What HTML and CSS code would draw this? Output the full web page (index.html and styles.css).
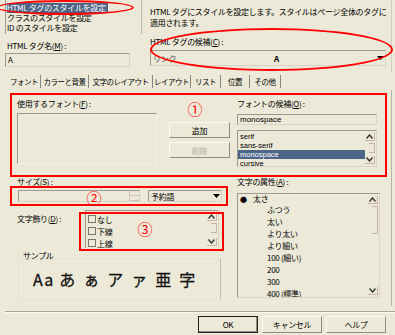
FILE: index.html
```html
<!DOCTYPE html>
<html>
<head>
	<title>スタイルの設定</title>
	<link rel="stylesheet" href="styles.css">
</head>
<body>
	<div class="dialog">
		<div class="top">
			<div class="top-left">
				<ul class="style-kinds">
					<li><span class="selected">HTML タグのスタイルを設定</span></li>
					<li>クラスのスタイルを設定</li>
					<li>ID のスタイルを設定</li>
				</ul>
				<div class="label tag-label">HTML タグ名(<u>M</u>) :</div>
				<div class="textbox tag-name">A</div>
			</div>
			<div class="top-right">
				<p class="desc">HTML タグにスタイルを設定します。スタイルはページ全体のタグに<br>適用されます。</p>
				<div class="label cand-label">HTML タグの候補(<u>C</u>) :</div>
				<div class="combo candidates">
					<span class="combo-text">リンク</span>
					<span class="combo-mid">A</span>
					<span class="combo-arrow"><svg width="7" height="4" viewBox="0 0 7 4"><polygon points="0,0 7,0 3.5,4" fill="#000"/></svg></span>
				</div>
			</div>
		</div>

		<div class="tabs">
			<span class="tab active">フォント</span>
			<span class="tab">カラーと背景</span>
			<span class="tab">文字のレイアウト</span>
			<span class="tab">レイアウト</span>
			<span class="tab">リスト</span>
			<span class="tab">位置</span>
			<span class="tab">その他</span>
		</div>

		<div class="tab-body">
			<div class="col-left">
				<div class="label">使用するフォント(<u>F</u>) :</div>
				<div class="font-row">
					<div class="fontbox"></div>
					<div class="btn-col">
						<button class="btn">追加</button>
						<button class="btn disabled">削除</button>
					</div>
				</div>

				<div class="label size-label">サイズ(<u>S</u>) :</div>
				<div class="size-row">
					<div class="spinbox">
						<span class="spin-field"></span>
						<span class="spin-btns"><i></i><i></i></span>
					</div>
					<div class="combo units">
						<span class="combo-text">予約語</span>
						<span class="combo-arrow"><svg width="7" height="4" viewBox="0 0 7 4"><polygon points="0,0 7,0 3.5,4" fill="#000"/></svg></span>
					</div>
				</div>

				<div class="decor-row">
					<div class="label decor-label">文字飾り(<u>D</u>) :</div>
					<div class="listbox decor-list">
						<ul class="checks">
							<li><span class="check"></span>なし</li>
							<li><span class="check"></span>下線</li>
							<li><span class="check"></span>上線</li>
						</ul>
						<div class="vscroll">
							<span class="sb-btn"><svg width="7" height="5" viewBox="0 0 7 5"><polyline points="0.5,4.5 3.5,1 6.5,4.5" fill="none" stroke="#333" stroke-width="1.4"/></svg></span>
							<span class="sb-thumb"></span>
							<span class="sb-btn"><svg width="7" height="5" viewBox="0 0 7 5"><polyline points="0.5,0.5 3.5,4 6.5,0.5" fill="none" stroke="#333" stroke-width="1.4"/></svg></span>
						</div>
					</div>
				</div>

				<div class="sample-title">サンプル</div>
				<div class="sample-box">
					<span class="sample-text"><span class="latin">Aa</span>あぁアァ亜字</span>
				</div>
			</div>

			<div class="col-right">
				<div class="label">フォントの候補(<u>O</u>) :</div>
				<div class="textbox font-input">monospace</div>
				<div class="listbox font-list">
					<ul class="rows">
						<li>serif</li>
						<li>sans-serif</li>
						<li class="selected">monospace</li>
						<li>cursive</li>
					</ul>
					<div class="vscroll">
						<span class="sb-btn"><svg width="7" height="5" viewBox="0 0 7 5"><polyline points="0.5,4.5 3.5,1 6.5,4.5" fill="none" stroke="#333" stroke-width="1.4"/></svg></span>
						<span class="sb-thumb"></span>
						<span class="sb-btn"><svg width="7" height="5" viewBox="0 0 7 5"><polyline points="0.5,0.5 3.5,4 6.5,0.5" fill="none" stroke="#333" stroke-width="1.4"/></svg></span>
					</div>
				</div>

				<div class="label attr-label">文字の属性(<u>A</u>) :</div>
				<div class="listbox attr-list">
					<ul class="attrs">
						<li class="group"><span class="bullet">●</span>太さ</li>
						<li>ふつう</li>
						<li>太い</li>
						<li>より太い</li>
						<li>より細い</li>
						<li>100 (細い)</li>
						<li>200</li>
						<li>300</li>
						<li>400 (標準)</li>
					</ul>
					<div class="vscroll">
						<span class="sb-btn"><svg width="7" height="5" viewBox="0 0 7 5"><polyline points="0.5,4.5 3.5,1 6.5,4.5" fill="none" stroke="#333" stroke-width="1.4"/></svg></span>
						<span class="sb-thumb tall"></span>
						<span class="sb-btn"><svg width="7" height="5" viewBox="0 0 7 5"><polyline points="0.5,0.5 3.5,4 6.5,0.5" fill="none" stroke="#333" stroke-width="1.4"/></svg></span>
					</div>
				</div>
			</div>
		</div>

		<div class="footer">
			<button class="btn default">OK</button>
			<button class="btn">キャンセル</button>
			<button class="btn">ヘルプ</button>
		</div>

		<!-- red annotations drawn over the dialog -->
		<div class="mark ellipse e1"></div>
		<div class="mark ellipse e2"></div>
		<div class="mark rect r1"></div>
		<div class="mark rect r2"></div>
		<div class="mark rect r3"></div>
		<span class="num n1">①</span>
		<span class="num n2">②</span>
		<span class="num n3">③</span>
	</div>
</body>
</html>
```

FILE: styles.css
```css
body {
	margin: 0;
	background-color: #ECE9D8;
}

.dialog {
	position: relative;
	width: 395px;
	height: 335px;
	overflow: hidden;
	font-family: "Noto Sans CJK JP", "Noto Sans", sans-serif;
	font-size: 8px;
	letter-spacing: -0.3px;
	color: #000;
	background-color: #ECE9D8;
}

ul {
	list-style: none;
	margin: 0;
	padding: 0;
}

u {
	text-decoration: underline;
	text-underline-offset: 1px;
}

.label {
	height: 10px;
	line-height: 10px;
	white-space: nowrap;
}

/* top area */
.top {
	display: flex;
	height: 72px;
}

.top-left {
	width: 137px;
	padding-left: 5px;
}

.style-kinds {
	height: 31px;
	padding-top: 3px;
	border-left: 1px solid #9c9a90;
	border-right: 1px solid #bdb9ad;
}

.style-kinds li {
	height: 10px;
	line-height: 10px;
	padding-left: 1px;
	white-space: nowrap;
}

.style-kinds .selected {
	display: inline-block;
	background-color: #4D6586;
	color: #fff;
	padding-right: 2px;
}

.tag-label {
	margin-top: 7px;
	padding-left: 2px;
}

.textbox {
	box-sizing: border-box;
	border: 1px solid;
	border-color: #9c9a90 #d8d4c8 #d8d4c8 #9c9a90;
	padding-left: 2px;
	white-space: nowrap;
}

.tag-name {
	margin-top: 2px;
	width: 125px;
	height: 14px;
	line-height: 12px;
}

.top-right {
	flex: 1;
	padding-left: 8px;
	border-right: 1px solid #d0ccc0;
	margin-right: 3px;
}

.desc {
	margin: 0;
	padding-top: 6px;
	line-height: 11px;
	white-space: nowrap;
}

.cand-label {
	margin-top: 9px;
}

.combo {
	box-sizing: border-box;
	display: flex;
	align-items: center;
	border: 1px solid;
	border-color: #9c9a90 #d8d4c8 #d8d4c8 #9c9a90;
	background-color: #ECE9D8;
}

.combo-text {
	padding-left: 2px;
	white-space: nowrap;
}

.combo-arrow {
	margin-left: auto;
	width: 10px;
	height: 100%;
	display: flex;
	align-items: center;
	justify-content: center;
	border-left: 1px solid #e8e4da;
	box-sizing: border-box;
}

.candidates {
	margin-top: 3px;
	width: 236px;
	height: 16px;
	color: #555;
}

.candidates .combo-mid {
	margin-left: 98px;
	color: #000;
	font-weight: bold;
}

/* tabs */
.tabs {
	display: flex;
	height: 18px;
	align-items: center;
	padding-left: 8px;
	font-size: 7.5px;
	letter-spacing: -0.5px;
}

.tab {
	box-sizing: border-box;
	line-height: 13px;
	text-align: center;
	border-right: 1px solid #8a877e;
	white-space: nowrap;
}

.tab:nth-child(1) { width: 33px; }
.tab:nth-child(2) { width: 48px; }
.tab:nth-child(3) { width: 64px; }
.tab:nth-child(4) { width: 38px; }
.tab:nth-child(5) { width: 30px; }
.tab:nth-child(6) { width: 29px; }
.tab:nth-child(7) { width: 31px; }

/* tab page */
.tab-body {
	display: flex;
	gap: 7px;
	height: 216px;
	padding: 9px 0 0 17px;
	margin-right: 3px;
	border-right: 1px solid #b6b2a6;
	box-sizing: border-box;
}

.col-left {
	width: 213px;
}

.col-right {
	width: 143px;
}

.font-row {
	display: flex;
	margin-top: 4px;
	height: 52px;
}

.fontbox {
	box-sizing: border-box;
	width: 140px;
	height: 51px;
	border: 1px solid;
	border-color: #9c9a90 #f4f2ea #f4f2ea #9c9a90;
}

.btn-col {
	display: flex;
	flex-direction: column;
	gap: 4px;
	width: 61px;
	margin-left: 12px;
	padding-top: 9px;
}

.btn {
	box-sizing: border-box;
	height: 16px;
	padding: 0;
	font: inherit;
	letter-spacing: inherit;
	color: #000;
	background-color: #ECE9D8;
	border: 1px solid;
	border-color: #fbfaf6 #8f8c82 #8f8c82 #fbfaf6;
	cursor: default;
}

.btn.disabled {
	color: #b0aca2;
}

.size-label {
	margin-top: 12px;
}

.size-row {
	display: flex;
	height: 12px;
	margin-top: 3px;
	padding-left: 1px;
}

.spinbox {
	box-sizing: border-box;
	display: flex;
	width: 122px;
	border: 1px solid;
	border-color: #9c9a90 #d8d4c8 #d8d4c8 #9c9a90;
}

.spin-field {
	flex: 1;
}

.spin-btns {
	display: flex;
	flex-direction: column;
	width: 9px;
	border-left: 1px solid #cfc0b8;
}

.spin-btns i {
	flex: 1;
	border-bottom: 1px solid #cfc0b8;
}

.units {
	width: 74px;
	margin-left: 8px;
}

.decor-row {
	display: flex;
	margin-top: 8px;
}

.decor-label {
	width: 68px;
	margin-top: 4px;
}

.listbox {
	box-sizing: border-box;
	display: flex;
	border: 1px solid;
	border-color: #9c9a90 #d8d4c8 #d8d4c8 #9c9a90;
	overflow: hidden;
}

.listbox > ul {
	flex: 1;
}

.decor-list {
	width: 134px;
	height: 38px;
	border-bottom: none;
}

.checks {
	padding-top: 2px;
}

.checks li {
	display: flex;
	align-items: center;
	height: 12px;
	padding-left: 2px;
}

.check {
	box-sizing: border-box;
	width: 8px;
	height: 8px;
	margin-right: 1px;
	border: 1px solid #7a776f;
}

.vscroll {
	display: flex;
	flex-direction: column;
	justify-content: space-between;
	width: 10px;
	margin-right: 1px;
	padding: 2px 0;
}

.sb-btn {
	box-sizing: border-box;
	display: flex;
	align-items: center;
	justify-content: center;
	height: 8px;
	border-right: 1px solid #c9b3aa;
	border-bottom: 1px solid #c9b3aa;
}

.sb-thumb {
	align-self: flex-end;
	width: 5px;
	height: 8px;
	margin-bottom: auto;
	margin-top: 2px;
	border-right: 1px solid #c9b3aa;
	border-bottom: 1px solid #c9b3aa;
	border-top: 1px solid #c9b3aa;
}

.sb-thumb.tall {
	height: 26px;
}

.sample-title {
	margin-top: 4px;
	padding-left: 6px;
	height: 8px;
	line-height: 8px;
}

.sample-box {
	box-sizing: border-box;
	display: flex;
	align-items: center;
	width: 203px;
	height: 42px;
	margin-left: 1px;
	margin-top: -2px;
	padding-left: 14px;
	border: 1px solid #e6e1d4;
	border-right-color: #c9b9b0;
}

.sample-text {
	font-size: 16px;
	letter-spacing: 8px;
	color: #111;
	white-space: nowrap;
	-webkit-text-stroke: 0.3px #111;
}

.sample-text .latin {
	letter-spacing: 1px;
	margin-right: 5px;
}

.font-input {
	margin-top: 5px;
	width: 140px;
	height: 11px;
	line-height: 9px;
	font-family: "Liberation Sans", sans-serif;
	letter-spacing: 0;
}

.font-list {
	margin-top: 5px;
	width: 140px;
	height: 37px;
	font-family: "Liberation Sans", sans-serif;
	font-size: 7.5px;
	letter-spacing: 0;
}

.rows {
	padding-top: 1px;
}

.rows li {
	height: 9px;
	line-height: 9px;
	padding-left: 2px;
}

.rows li.selected {
	background-color: #4D6586;
	color: #fff;
}

.attr-label {
	margin-top: 10px;
}

.attr-list {
	margin-top: 6px;
	width: 143px;
	height: 105px;
}

.attrs li {
	height: 12px;
	line-height: 12px;
	padding-left: 29px;
	white-space: nowrap;
}

.attrs li.group {
	height: 10px;
	line-height: 10px;
	padding-left: 2px;
}

.bullet {
	display: inline-block;
	width: 13px;
	font-size: 7px;
}

/* bottom buttons */
.footer {
	display: flex;
	justify-content: flex-start;
	gap: 4px;
	margin-top: 5px;
	margin-left: 5px;
	padding: 4px 0 0 193px;
	border-top: 1px solid #a8a59a;
	box-shadow: inset 0 1px 0 #fbfaf6;
}

.footer .btn {
	width: 60px;
	height: 17px;
}

.footer .btn.default {
	border: 1px solid #222;
	box-shadow: inset -1px -1px 0 #8f8c82;
}

/* red annotations */
.mark {
	position: absolute;
	box-sizing: border-box;
	border: 2px solid #f00;
}

.ellipse {
	border-radius: 50%;
}

.e1 {
	left: -4px;
	top: 0;
	width: 138px;
	height: 15px;
}

.e2 {
	left: 150px;
	top: 28px;
	width: 243px;
	height: 43px;
}

.r1 {
	left: 10px;
	top: 93px;
	width: 377px;
	height: 84px;
}

.r2 {
	left: 10px;
	top: 186px;
	width: 218px;
	height: 20px;
}

.r3 {
	left: 79px;
	top: 212px;
	width: 145px;
	height: 39px;
}

.num {
	position: absolute;
	width: 20px;
	height: 20px;
	line-height: 20px;
	text-align: center;
	font-size: 15px;
	letter-spacing: 0;
	color: #f00;
}

.n1 {
	left: 185px;
	top: 99px;
}

.n2 {
	left: 84px;
	top: 188px;
}

.n3 {
	left: 135px;
	top: 219px;
}
```
